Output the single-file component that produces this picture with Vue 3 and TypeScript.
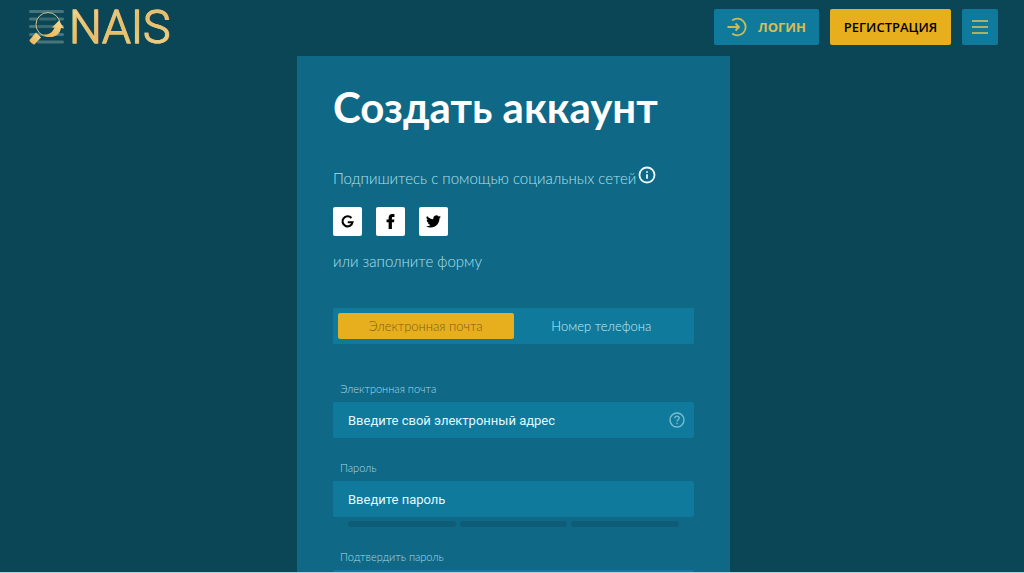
<script setup lang="ts">
import { ref } from 'vue'

type Mode = 'email' | 'phone'

const mode = ref<Mode>('email')
const email = ref('')
const password = ref('')
const confirmation = ref('')
const strengthSteps = [1, 2, 3]
</script>

<template>
  <div class="page">
    <header class="header">
      <a class="logo" href="#" aria-label="NAIS">
        <svg class="logo-mark" viewBox="0 0 36 36" aria-hidden="true">
          <defs>
            <linearGradient id="gold" x1="0" y1="1" x2="1" y2="0">
              <stop offset="0" stop-color="#eab052" />
              <stop offset="1" stop-color="#f6dc92" />
            </linearGradient>
          </defs>
          <g stroke="#48747b" stroke-width="3.200" stroke-linecap="round">
            <path d="M2 2.500H34M2 10H34M2 17.500H34M2 25.500H34M10 33H34" />
          </g>
          <circle cx="19.500" cy="15.500" r="12" fill="#0b4656" stroke="#cfc894" stroke-width="1" />
          <path d="M11 10h17M9 17.500h17" stroke="#3a6871" stroke-width="3" />
          <path d="M13 25C19 27 24 24 26 18.500L23.500 18.500L30.500 11.500L35.500 19.500L32.500 19C31 28 21 31 13 25Z" fill="url(#gold)" />
          <path d="M7.500 23.500L12.500 28.500L6 35.500C5 36 .5 32.500 1 31Z" fill="url(#gold)" />
        </svg>
        <span class="logo-name">NAIS</span>
      </a>
      <nav class="actions">
        <button class="button login" type="button">
          <svg class="login-icon" viewBox="0 0 20 20" aria-hidden="true">
            <path d="M5.200 3.500A8.300 8.300 0 1 1 5.200 16.500M.5 10H12M8.500 6.500L12 10L8.500 13.500" />
          </svg>
          <span>ЛОГИН</span>
        </button>
        <button class="button register" type="button">РЕГИСТРАЦИЯ</button>
        <button class="button menu" type="button" aria-label="Меню">
          <svg viewBox="0 0 16 14" aria-hidden="true"><path d="M0 1H16M0 7H16M0 13H16" /></svg>
        </button>
      </nav>
    </header>

    <main class="content">
      <form class="card" @submit.prevent>
        <h1>Создать аккаунт</h1>
        <p class="social-title">
          <span>Подпишитесь с помощью социальных сетей</span>
          <svg class="info" viewBox="0 0 18 18" aria-hidden="true">
            <circle cx="9" cy="9" r="7.500" />
            <path d="M9 8.200V12.800M9 5.200V6.700" />
          </svg>
        </p>
        <div class="socials">
          <button type="button" aria-label="Google">
            <svg viewBox="0 0 16 16" aria-hidden="true">
              <path d="M12.200 4.300A5.400 5.400 0 1 0 13.400 8.700H8.300" fill="none" stroke="#000" stroke-width="2.200" />
            </svg>
          </button>
          <button type="button" aria-label="Facebook">
            <svg viewBox="0 0 16 16" aria-hidden="true">
              <path d="M6 16V8.800H3.800V5.800H6V4.200C6 1.500 7.400 0 9.900 0C10.900 0 11.900.1 12.200.2V3.100H10.700C9.700 3.100 9.500 3.600 9.500 4.300V5.800H12.100L11.700 8.800H9.500V16Z" />
            </svg>
          </button>
          <button type="button" aria-label="Twitter">
            <svg viewBox="0 0 24 24" aria-hidden="true">
              <path d="M23.950 4.570a10 10 0 0 1-2.820.770 4.960 4.960 0 0 0 2.160-2.720c-.950.560-2 .960-3.130 1.190a4.920 4.920 0 0 0-8.380 4.480C7.690 8.100 4.070 6.130 1.640 3.160a4.920 4.920 0 0 0 1.520 6.570 4.900 4.900 0 0 1-2.230-.610v.060a4.920 4.920 0 0 0 3.950 4.830 5 5 0 0 1-2.210.080 4.940 4.940 0 0 0 4.600 3.420A9.870 9.870 0 0 1 0 19.540a14 14 0 0 0 7.550 2.210c9.050 0 14-7.500 14-13.980 0-.210 0-.420-.020-.630a9.940 9.940 0 0 0 2.420-2.570z" />
            </svg>
          </button>
        </div>
        <p class="or">или заполните форму</p>

        <div class="tabs">
          <button type="button" :class="{ active: mode === 'email' }" :aria-pressed="mode === 'email'" @click="mode = 'email'">Электронная почта</button>
          <button type="button" :class="{ active: mode === 'phone' }" :aria-pressed="mode === 'phone'" @click="mode = 'phone'">Номер телефона</button>
        </div>

        <div class="field">
          <label for="email">Электронная почта</label>
          <div class="control">
            <input id="email" v-model="email" type="email" placeholder="Введите свой электронный адрес" />
            <svg class="help" viewBox="0 0 16 16" aria-hidden="true">
              <circle cx="8" cy="8" r="7" />
              <path d="M5.900 6.300C5.900 3.400 10.200 3.500 10.200 6.100C10.200 7.700 8 7.700 8 9.500M8 10.800V12.200" />
            </svg>
          </div>
        </div>

        <div class="field">
          <label for="password">Пароль</label>
          <div class="control">
            <input id="password" v-model="password" type="password" placeholder="Введите пароль" />
          </div>
          <div class="strength" aria-hidden="true">
            <span v-for="step in strengthSteps" :key="step"></span>
          </div>
        </div>

        <div class="field">
          <label for="confirmation">Подтвердить пароль</label>
          <div class="control">
            <input id="confirmation" v-model="confirmation" type="password" />
          </div>
        </div>
      </form>
    </main>
  </div>
</template>

<style>
body {
  margin: 0;
  background: #0b4656;
}
</style>

<style scoped>
* {
  box-sizing: border-box;
}

.page {
  display: flex;
  flex-direction: column;
  height: 100vh;
  border-bottom: 1px solid #a9d3dd;
  background: #0b4656;
  color: #fff;
  font-family: Lato, "Open Sans", sans-serif;
}

button,
input {
  margin: 0;
  border: 0;
  font: inherit;
}

button {
  padding: 0;
  cursor: pointer;
}

.header {
  display: flex;
  flex: none;
  align-items: center;
  justify-content: space-between;
  height: 56px;
  padding: 0 26px 2px 28px;
}

.logo {
  display: flex;
  align-items: center;
  gap: 4px;
  color: #efc978;
  text-decoration: none;
}

.logo-mark {
  width: 37px;
  height: 36px;
}

.logo-name {
  background: linear-gradient(160deg, #f7e29b, #e8b860 50%, #f3dc95);
  background-clip: text;
  color: transparent;
  font-family: Roboto, sans-serif;
  font-size: 46px;
  font-weight: 300;
  line-height: 48px;
  -webkit-text-stroke: 1px #e6c67c;
}

.actions {
  display: flex;
  gap: 11px;
}

.button {
  display: flex;
  align-items: center;
  justify-content: center;
  height: 36px;
  border-radius: 2px;
  background: #107a9c;
  font-family: "Open Sans", sans-serif;
  font-size: 13px;
  font-weight: 600;
}

.login {
  gap: 11px;
  width: 105px;
  color: #d9bd50;
  font-weight: 700;
}

.login-icon {
  width: 20px;
  height: 20px;
  fill: none;
  stroke: #c9bb58;
  stroke-width: 1.800;
}

.register {
  width: 121px;
  background: #e7af1d;
  color: #000;
}

.menu {
  width: 36px;
}

.menu svg {
  width: 16px;
  height: 14px;
  stroke: #d9c458;
  stroke-width: 1.400;
}

.content {
  display: flex;
  flex: 1;
  justify-content: center;
  min-height: 0;
  overflow-y: auto;
  scrollbar-width: none;
  padding: 0 26px 0 29px;
}

.card {
  width: 100%;
  max-width: 433px;
  height: max-content;
  padding: 26px 36px 36px;
  background: #0f6886;
}

h1 {
  margin: 0;
  font-size: 42px;
  font-weight: 700;
  line-height: 50px;
}

.social-title,
.or {
  margin: 0;
  color: #afe0eb;
  font-size: 15px;
  font-weight: 300;
  line-height: 20px;
}

.social-title {
  display: flex;
  gap: 2px;
  margin-top: 34px;
}

.social-title span {
  padding-top: 2px;
}

.info {
  width: 18px;
  height: 18px;
  fill: none;
  stroke: #e9fbff;
  stroke-width: 1.800;
}

.socials {
  display: flex;
  gap: 14px;
  margin: 19px 0 15px;
}

.socials button {
  display: flex;
  align-items: center;
  justify-content: center;
  width: 29px;
  height: 29px;
  border-radius: 2px;
  background: #fff;
}

.socials svg {
  width: 15px;
  height: 15px;
}

.tabs {
  display: grid;
  grid-template-columns: 1fr 1fr;
  height: 36px;
  margin: 37px 0;
  padding: 5px;
  border-radius: 2px;
  background: #107a9c;
}

.tabs button {
  border-radius: 2px;
  background: transparent;
  color: #c2ecf5;
  font-size: 13px;
  font-weight: 300;
}

.tabs .active {
  background: #e7af1d;
  color: #7d611a;
}

.field {
  margin-bottom: 22px;
}

.field label {
  display: block;
  padding: 0 7px;
  color: #a3dae6;
  font-size: 11px;
  font-weight: 300;
  line-height: 16px;
}

.control {
  display: flex;
  align-items: center;
  height: 36px;
  margin-top: 5px;
  padding: 0 9px 0 15px;
  border-radius: 2px;
  background: #107a9c;
}

.control input {
  flex: 1;
  min-width: 0;
  padding: 0;
  outline: 0;
  background: transparent;
  color: #e1f9ff;
  font-family: Roboto, sans-serif;
  font-size: 13px;
}

.control input::placeholder {
  color: #e1f9ff;
  opacity: 1;
}

.help {
  width: 16px;
  height: 16px;
  fill: none;
  stroke: #78bdd0;
  stroke-width: 1.400;
}

.strength {
  display: grid;
  grid-template-columns: repeat(3, 1fr);
  gap: 4px;
  margin-top: 4px;
  padding: 0 15px;
}

.strength span {
  height: 6px;
  border-radius: 3px;
  background: #0e5c77;
}
</style>
